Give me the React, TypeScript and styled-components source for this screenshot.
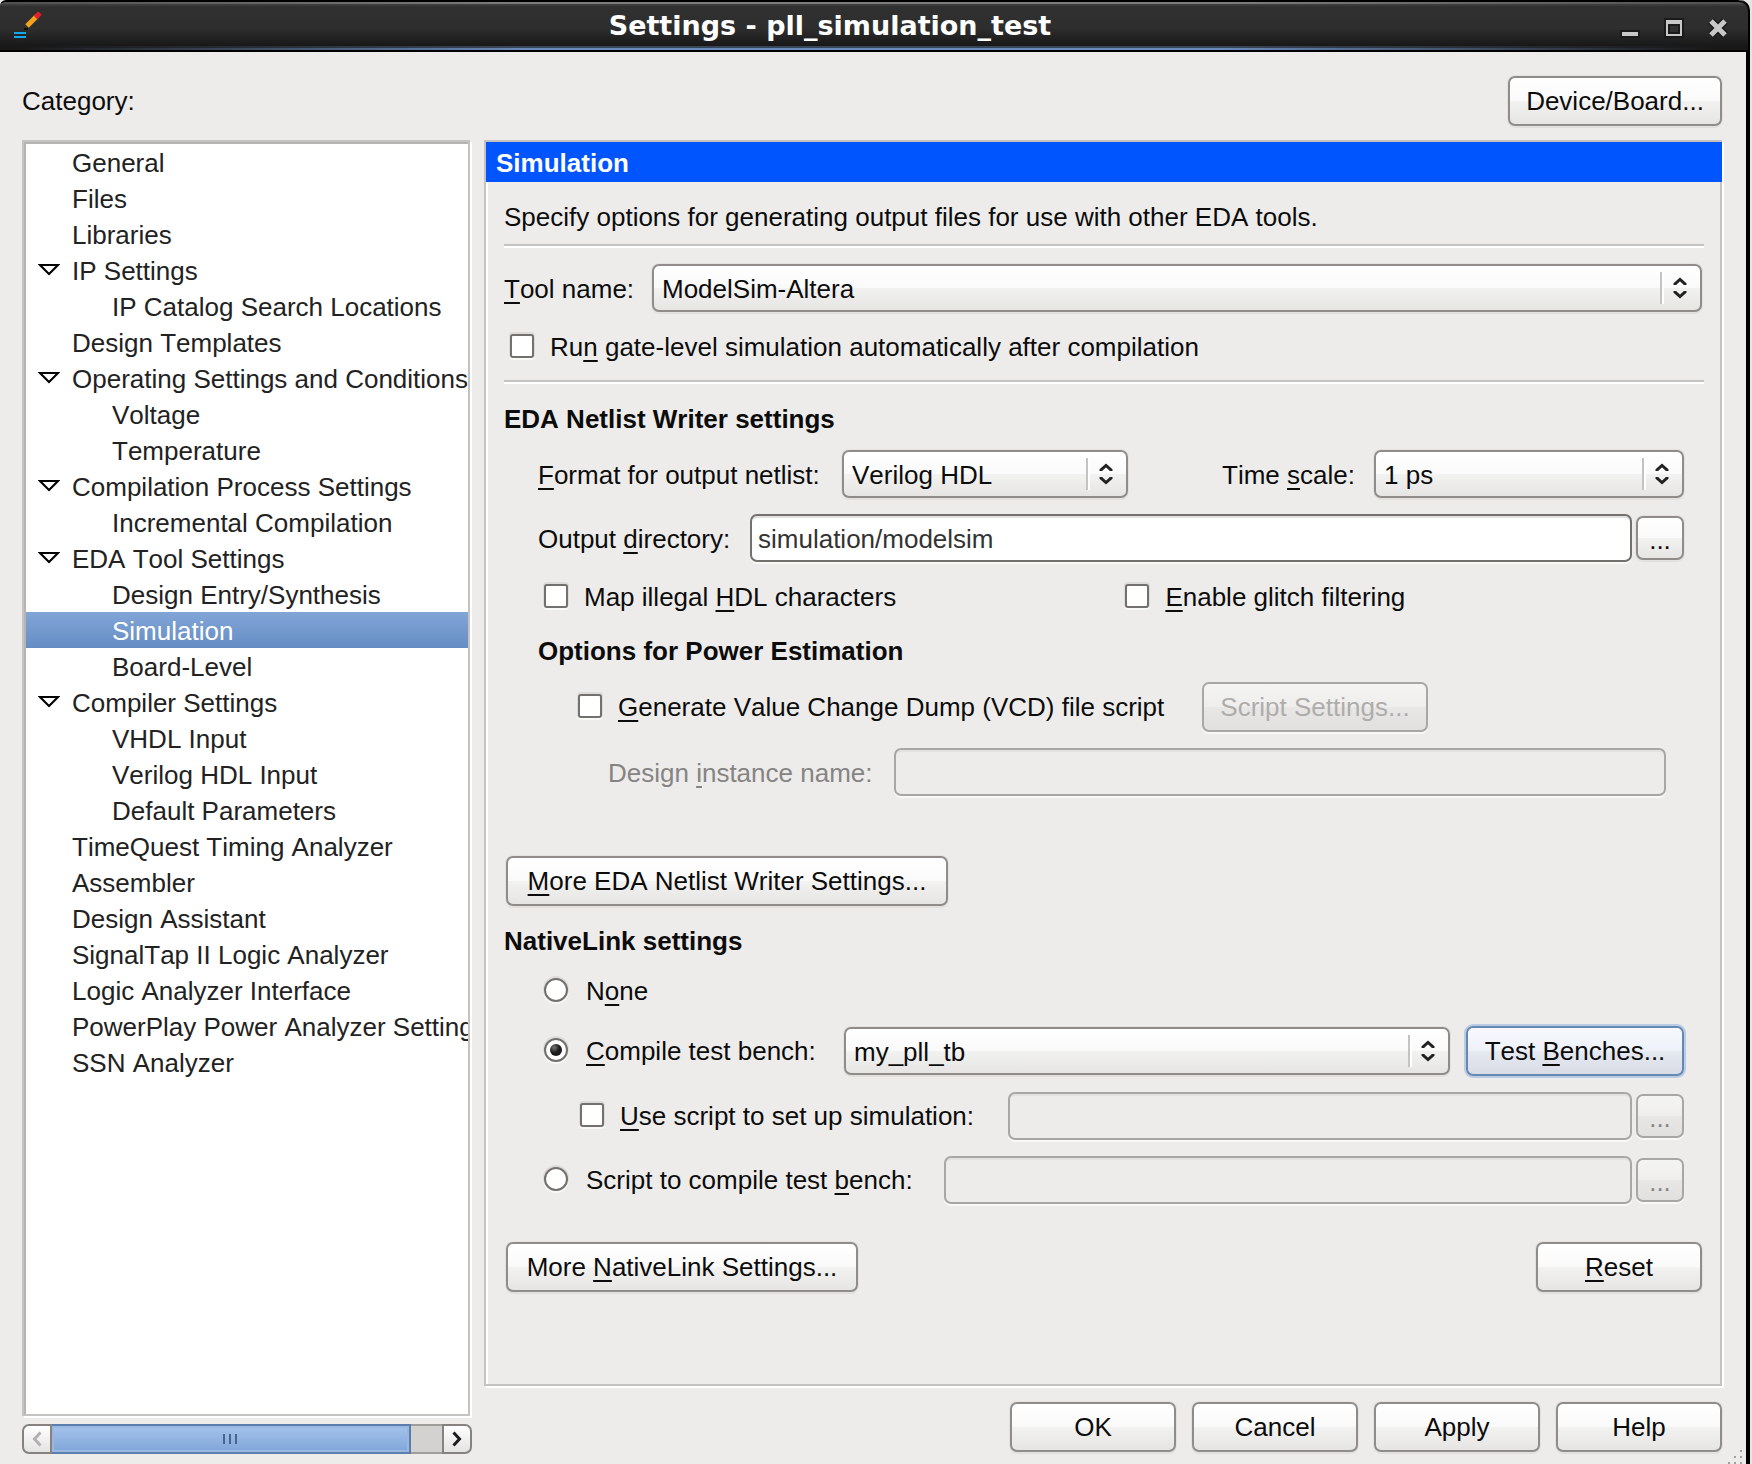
import React, { useId, useState } from "react";
import styled, { createGlobalStyle, css } from "styled-components";

const color = {
  base: "#edeceb",
  ink: "#0c0c0c",
  listInk: "#222222",
  line: "#c4c3c1",
  controlLine: "#8f8c89",
  fieldLine: "#73706d",
  disabledLine: "#a9a7a5",
  disabledInk: "#858483",
  accent: "#0055ff",
};

const GlobalStyle = createGlobalStyle`
  *, *::before, *::after { box-sizing: border-box; }
  body {
    margin: 0;
    background: #e6e5e4;
    color: ${color.ink};
    font: 26px/30px "Liberation Sans", Arial, sans-serif;
    font-kerning: none;
  }
  button, input, select { font: inherit; font-kerning: none; color: inherit; margin: 0; }
`;

const WindowFrame = styled.div`
  position: relative;
  display: flex;
  flex-direction: column;
  min-height: 100vh;
  margin-right: 2px;
  border-right: 4px solid #000000;
  border-radius: 0 10px 0 0;
  background: ${color.base};
`;

const TitleBar = styled.header`
  display: flex;
  align-items: center;
  height: 52px;
  margin-right: -2px;
  padding: 0 18px 0 14px;
  border-top: 2px solid #000000;
  border-bottom: 2px solid #000000;
  border-radius: 6px 10px 0 0;
  background:
    linear-gradient(90deg, transparent 1%, #6a8ab8 30%, #6a8ab8 70%, transparent 98%) 0 46px / 100% 2px no-repeat,
    linear-gradient(90deg, transparent 1%, #38465a 30%, #38465a 70%, transparent 98%) 0 44px / 100% 2px no-repeat,
    linear-gradient(90deg, transparent, #7c7c7c 30%, #7c7c7c 70%, transparent) 0 0 / 100% 2px no-repeat,
    linear-gradient(#505050 2px, #3c3c3c 2px, #3c3c3c 4px, #303030 4px, #2e2e2e 26px, #181818 44px);
`;

const Title = styled.h1`
  flex: 1;
  margin: 0;
  color: #ffffff;
  font: bold 27px/30px "DejaVu Sans", sans-serif;
  text-align: center;
`;

const WindowButtons = styled.div`
  display: flex;
  gap: 20px;
`;

const WindowButton = styled.button`
  display: flex;
  width: 24px;
  height: 24px;
  padding: 0;
  border: 0;
  background: none;
`;

const Content = styled.div`
  display: flex;
  flex: 1;
  flex-direction: column;
  gap: 14px;
  padding: 24px 24px 10px 22px;
`;

const Row = styled.div<{ $top?: number; $indent?: number; $end?: number; $gap?: number }>`
  display: flex;
  align-items: center;
  gap: ${(p) => p.$gap ?? 16}px;
  margin-top: ${(p) => p.$top ?? 0}px;
  padding-left: ${(p) => p.$indent ?? 0}px;
  padding-right: ${(p) => p.$end ?? 0}px;
`;

const FieldGroup = styled.div<{ $gap: number }>`
  display: flex;
  flex: 1;
  align-items: center;
  gap: ${(p) => p.$gap}px;
  min-width: 0;
`;

const TwoChecks = styled.div`
  display: grid;
  grid-template-columns: 51% 49%;
  margin-top: 20px;
  padding: 0 20px 0 40px;
`;

const Spacer = styled.div`
  flex: 1;
`;

const PushButton = styled.button<{ $minWidth?: number; $focused?: boolean }>`
  height: 50px;
  min-width: ${(p) => p.$minWidth ?? 0}px;
  padding: 0 12px;
  border: 2px solid ${color.controlLine};
  border-radius: 7px;
  background: linear-gradient(#ffffff, #fafafa 50%, #f2f2f1 50%, #e6e5e4);
  box-shadow: 0 0 0 1px #e3e2e0, 0 2px 0 #e0dfdd;
  white-space: nowrap;
  ${(p) =>
    p.$focused &&
    css`
      border-color: #6688b4;
      background: linear-gradient(#f7f9fe, #eef1f8 50%, #e5e9f1 50%, #d9dce4);
      box-shadow: 0 0 0 2px #b9cce4;
    `}
  &:disabled {
    border-color: ${color.disabledLine};
    background: linear-gradient(#f4f4f3, #efeeed 50%, #e8e7e6 50%, #e1e0df);
    box-shadow: 0 2px 0 #f8f8f7;
    color: #aeadab;
  }
`;

const BrowseButton = styled(PushButton)`
  width: 48px;
  height: 44px;
  padding: 4px 0 0;
  &:disabled { color: ${color.disabledInk}; }
`;

const Columns = styled.main`
  display: grid;
  flex: 1;
  grid-template-columns: 450px minmax(0, 1fr);
  gap: 12px;
`;

const Column = styled.div`
  display: flex;
  flex-direction: column;
  min-width: 0;
`;

const CategoryList = styled.ul`
  flex: 1;
  margin: 0 2px 8px 0;
  padding: 2px 0 0 2px;
  overflow: hidden;
  border: 2px solid ${color.line};
  box-shadow: inset 2px 2px 0 #b6b5b4, 2px 2px 0 #ffffff;
  background: #ffffff;
  list-style: none;
`;

const CategoryItem = styled.button<{ $child: boolean; $selected: boolean }>`
  display: flex;
  align-items: center;
  width: 100%;
  height: 36px;
  padding: 2px 0 0 ${(p) => (p.$child ? 86 : 12)}px;
  border: 0;
  background: ${(p) => (p.$selected ? "linear-gradient(#82a5d7, #658dc4)" : "none")};
  color: ${(p) => (p.$selected ? "#ffffff" : color.listInk)};
  text-align: left;
  white-space: nowrap;
`;

const Twisty = styled.span`
  display: flex;
  flex: none;
  width: 34px;
`;

const ScrollBar = styled.div`
  display: flex;
  height: 30px;
`;

const ScrollButton = styled.button<{ $side: "left" | "right" }>`
  display: flex;
  align-items: center;
  justify-content: center;
  width: 30px;
  padding: 0;
  border: 2px solid #85827f;
  border-radius: ${(p) => (p.$side === "left" ? "7px 0 0 7px" : "0 7px 7px 0")};
  background: linear-gradient(#ffffff, #e4e3e2);
`;

const ScrollTrack = styled.div`
  flex: 1;
  border: 2px solid #a09e9b;
  border-width: 2px 0;
  background: #d4d2d0;
`;

const ScrollThumb = styled.div`
  display: flex;
  align-items: center;
  justify-content: center;
  gap: 4px;
  width: 92%;
  height: 30px;
  margin-top: -2px;
  border: 2px solid #5c7eac;
  border-left: 0;
  background: linear-gradient(#a5c3ec, #80a5d8);
  box-shadow: inset 0 0 0 2px #98b8e2;
`;

const Grip = styled.span`
  width: 2px;
  height: 10px;
  background: #46658f;
`;

const Panel = styled.section`
  flex: 1;
  padding-bottom: 92px;
  border: 2px solid ${color.line};
  box-shadow: inset 2px 0 0 #ffffff, 2px 2px 0 #ffffff;
`;

const PanelTitle = styled.h2`
  margin: 0 -2px 0 0;
  padding: 6px 10px 4px;
  background: ${color.accent};
  color: #ffffff;
  font-size: 26px;
  line-height: 30px;
`;

const PanelBody = styled.div`
  padding: 20px 16px 0 18px;
`;

const Text = styled.p`
  margin: 0;
`;

const Separator = styled.hr<{ $top: number }>`
  height: 4px;
  margin: ${(p) => p.$top}px 0 0;
  border: 0;
  border-top: 2px solid ${color.line};
  background: #ffffff;
`;

const Heading = styled.h3<{ $top: number; $indent?: number }>`
  margin: ${(p) => p.$top}px 0 0;
  padding-left: ${(p) => p.$indent ?? 0}px;
  font-size: 26px;
  line-height: 30px;
`;

const FieldLabel = styled.label<{ $width: number; $disabled?: boolean }>`
  min-width: ${(p) => p.$width}px;
  padding-top: 2px;
  color: ${(p) => (p.$disabled ? color.disabledInk : "inherit")};
  white-space: nowrap;
`;

const Mnemonic = styled.span`
  text-decoration: underline 2px;
  text-underline-offset: 4px;
  text-decoration-skip-ink: none;
`;

const TextField = styled.input`
  flex: 1;
  min-width: 0;
  height: 48px;
  padding: 2px 6px 0;
  border: 2px solid ${color.fieldLine};
  border-radius: 7px;
  background: #ffffff;
  box-shadow: inset 0 2px 0 #e2e1e0, 0 2px 0 #f9f9f8;
  color: #333333;
  &:disabled {
    border-color: ${color.disabledLine};
    background: ${color.base};
  }
`;

const Combo = styled.div<{ $width?: number }>`
  display: grid;
  flex: ${(p) => (p.$width ? `0 0 ${p.$width}px` : "1")};
  grid-template-columns: minmax(0, 1fr) 42px;
`;

const ComboSelect = styled.select`
  grid-area: 1 / 1 / 2 / 3;
  height: 48px;
  padding: 2px 48px 0 8px;
  appearance: none;
  border: 2px solid ${color.controlLine};
  border-radius: 7px;
  background: linear-gradient(#ffffff, #fafafa 50%, #f2f2f1 50%, #e6e5e4);
  box-shadow: 0 0 0 1px #e3e2e0, 0 2px 0 #e0dfdd;
`;

const ComboArrows = styled.span`
  z-index: 1;
  display: flex;
  grid-area: 1 / 2;
  align-items: center;
  justify-content: center;
  height: 32px;
  margin: 8px 4px 8px 0;
  border-left: 2px solid ${color.line};
  box-shadow: inset 2px 0 0 #ffffff;
  pointer-events: none;
`;

const ToggleLabel = styled.label<{ $width?: number }>`
  display: flex;
  align-items: center;
  gap: 16px;
  min-width: ${(p) => p.$width ?? 0}px;
  white-space: nowrap;
`;

const Toggle = styled.input`
  && { margin-bottom: 2px; }
  display: grid;
  flex: none;
  place-items: center;
  width: 24px;
  height: 24px;
  appearance: none;
  border: 2px solid ${color.fieldLine};
  border-radius: ${(p) => (p.type === "radio" ? "50%" : "3px")};
  background: #ffffff;
  box-shadow: 0 -1px 0 1px #dddcda, 0 1px 0 1px #f8f8f7;
  &:checked::before {
    width: 12px;
    height: 12px;
    border-radius: ${(p) => (p.type === "radio" ? "50%" : "1px")};
    background: ${(p) => (p.type === "radio" ? "radial-gradient(circle at 35% 30%, #777777, #1c1c1c 45%)" : "#222222")};
    content: "";
  }
`;

const RadioLabel = styled(ToggleLabel)`
  gap: 18px;
`;

const Footer = styled.footer`
  display: flex;
  justify-content: flex-end;
  gap: 16px;
  margin-top: 16px;
  padding-bottom: 2px;
`;

const SizeGrip = styled.svg`
  position: absolute;
  right: 2px;
  bottom: 0;
`;

/** Renders a caption in which the character after "&" is the keyboard mnemonic. */
function Caption({ text }: { text: string }) {
  const at = text.indexOf("&");
  if (at < 0) return <>{text}</>;
  return (
    <span>
      {text.slice(0, at)}
      <Mnemonic>{text[at + 1]}</Mnemonic>
      {text.slice(at + 2)}
    </span>
  );
}

function ComboBox({ id, value, width, label }: { id?: string; value: string; width?: number; label?: string }) {
  return (
    <Combo $width={width}>
      <ComboSelect id={id} aria-label={label} defaultValue={value}>
        <option>{value}</option>
      </ComboSelect>
      <ComboArrows>
        <svg width="14" height="24" viewBox="0 0 14 24" fill="none" stroke="#222" strokeWidth="3">
          <path d="M2 9V8L7 3.500L12 8V9M2 15V16L7 20.500L12 16V15" />
        </svg>
      </ComboArrows>
    </Combo>
  );
}

function Check({ text, width }: { text: string; width?: number }) {
  return (
    <ToggleLabel $width={width}>
      <Toggle type="checkbox" />
      <Caption text={text} />
    </ToggleLabel>
  );
}

type RadioProps = { text: string; width?: number; checked: boolean; onSelect: () => void };

function Radio({ text, width, checked, onSelect }: RadioProps) {
  return (
    <RadioLabel $width={width}>
      <Toggle type="radio" name="native-link" checked={checked} onChange={onSelect} />
      <Caption text={text} />
    </RadioLabel>
  );
}

type Category = { name: string; child?: boolean; open?: boolean };

const categories: Category[] = [
  { name: "General" },
  { name: "Files" },
  { name: "Libraries" },
  { name: "IP Settings", open: true },
  { name: "IP Catalog Search Locations", child: true },
  { name: "Design Templates" },
  { name: "Operating Settings and Conditions", open: true },
  { name: "Voltage", child: true },
  { name: "Temperature", child: true },
  { name: "Compilation Process Settings", open: true },
  { name: "Incremental Compilation", child: true },
  { name: "EDA Tool Settings", open: true },
  { name: "Design Entry/Synthesis", child: true },
  { name: "Simulation", child: true },
  { name: "Board-Level", child: true },
  { name: "Compiler Settings", open: true },
  { name: "VHDL Input", child: true },
  { name: "Verilog HDL Input", child: true },
  { name: "Default Parameters", child: true },
  { name: "TimeQuest Timing Analyzer" },
  { name: "Assembler" },
  { name: "Design Assistant" },
  { name: "SignalTap II Logic Analyzer" },
  { name: "Logic Analyzer Interface" },
  { name: "PowerPlay Power Analyzer Settings" },
  { name: "SSN Analyzer" },
];

function CategoryTree() {
  const [selected, setSelected] = useState("Simulation");
  return (
    <Column>
      <CategoryList>
        {categories.map(({ name, child, open }) => (
          <li key={name}>
            <CategoryItem
              type="button"
              $child={!!child}
              $selected={name === selected}
              onClick={() => setSelected(name)}
            >
              {!child && (
                <Twisty>
                  {open && (
                    <svg width="22" height="16" viewBox="0 0 22 16" fill="#fff" stroke="#000" strokeWidth="2">
                      <path d="M2 2H20L11 11Z" />
                    </svg>
                  )}
                </Twisty>
              )}
              {name}
            </CategoryItem>
          </li>
        ))}
      </CategoryList>
      <ScrollBar>
        <ScrollButton type="button" $side="left" aria-label="Scroll left">
          <svg width="10" height="16" viewBox="0 0 10 16" fill="none" stroke="#b3b1af" strokeWidth="3">
            <path d="M8.500 1.500L2.500 8L8.500 14.500" />
          </svg>
        </ScrollButton>
        <ScrollTrack>
          <ScrollThumb>
            <Grip />
            <Grip />
            <Grip />
          </ScrollThumb>
        </ScrollTrack>
        <ScrollButton type="button" $side="right" aria-label="Scroll right">
          <svg width="10" height="16" viewBox="0 0 10 16" fill="none" stroke="#1c1c1c" strokeWidth="3">
            <path d="M1.500 1.500L7.500 8L1.500 14.500" />
          </svg>
        </ScrollButton>
      </ScrollBar>
    </Column>
  );
}

function SimulationPanel() {
  const id = useId();
  const [mode, setMode] = useState("bench");
  return (
    <Panel>
      <PanelTitle>Simulation</PanelTitle>
      <PanelBody>
        <Text>Specify options for generating output files for use with other EDA tools.</Text>
        <Separator $top={12} />
        <Row $top={16} $end={2}>
          <FieldLabel htmlFor={`${id}-tool`} $width={132}><Caption text="&Tool name:" /></FieldLabel>
          <ComboBox id={`${id}-tool`} value="ModelSim-Altera" />
        </Row>
        <Row $top={20} $indent={6}>
          <Check text="Ru&n gate-level simulation automatically after compilation" />
        </Row>
        <Separator $top={18} />

        <Heading $top={20}>EDA Netlist Writer settings</Heading>
        <Row $top={16} $indent={34} $end={20}>
          <FieldLabel htmlFor={`${id}-format`} $width={288}><Caption text="&Format for output netlist:" /></FieldLabel>
          <ComboBox id={`${id}-format`} value="Verilog HDL" width={286} />
          <Spacer />
          <FieldLabel htmlFor={`${id}-scale`} $width={136}><Caption text="Time &scale:" /></FieldLabel>
          <ComboBox id={`${id}-scale`} value="1 ps" width={310} />
        </Row>
        <Row $top={16} $indent={34} $end={20}>
          <FieldLabel htmlFor={`${id}-dir`} $width={196}><Caption text="Output &directory:" /></FieldLabel>
          <FieldGroup $gap={4}>
            <TextField id={`${id}-dir`} defaultValue="simulation/modelsim" />
            <BrowseButton type="button">...</BrowseButton>
          </FieldGroup>
        </Row>
        <TwoChecks>
          <Check text="Map illegal &HDL characters" />
          <Check text="&Enable glitch filtering" />
        </TwoChecks>
        <Heading $top={24} $indent={34}>Options for Power Estimation</Heading>
        <Row $top={16} $indent={74} $gap={24}>
          <Check text="&Generate Value Change Dump (VCD) file script" width={600} />
          <PushButton type="button" disabled $minWidth={226}>Script Settings...</PushButton>
        </Row>
        <Row $top={16} $indent={104} $end={38}>
          <FieldLabel htmlFor={`${id}-instance`} $width={270} $disabled>
            <Caption text="Design &instance name:" />
          </FieldLabel>
          <TextField id={`${id}-instance`} disabled />
        </Row>
        <Row $top={60} $indent={2}>
          <PushButton type="button" $minWidth={442}><Caption text="&More EDA Netlist Writer Settings..." /></PushButton>
        </Row>

        <Heading $top={20}>NativeLink settings</Heading>
        <Row $top={20} $indent={40}>
          <Radio text="N&one" checked={mode === "none"} onSelect={() => setMode("none")} />
        </Row>
        <Row $top={20} $indent={40} $end={20} $gap={24}>
          <Radio
            text="&Compile test bench:"
            width={276}
            checked={mode === "bench"}
            onSelect={() => setMode("bench")}
          />
          <FieldGroup $gap={16}>
            <ComboBox value="my_pll_tb" label="Test bench" />
            <PushButton type="button" $focused $minWidth={218}><Caption text="Test &Benches..." /></PushButton>
          </FieldGroup>
        </Row>
        <Row $top={16} $indent={76} $end={20} $gap={24}>
          <Check text="&Use script to set up simulation:" width={404} />
          <FieldGroup $gap={4}>
            <TextField disabled aria-label="Simulation setup script" />
            <BrowseButton type="button" disabled>...</BrowseButton>
          </FieldGroup>
        </Row>
        <Row $top={16} $indent={40} $end={20} $gap={24}>
          <Radio
            text="Script to compile test &bench:"
            width={376}
            checked={mode === "script"}
            onSelect={() => setMode("script")}
          />
          <FieldGroup $gap={4}>
            <TextField disabled aria-label="Test bench compile script" />
            <BrowseButton type="button" disabled>...</BrowseButton>
          </FieldGroup>
        </Row>
        <Row $top={38} $indent={2} $end={2}>
          <PushButton type="button" $minWidth={352}><Caption text="More &NativeLink Settings..." /></PushButton>
          <Spacer />
          <PushButton type="button" $minWidth={166}><Caption text="&Reset" /></PushButton>
        </Row>
      </PanelBody>
    </Panel>
  );
}

export default function App() {
  return (
    <>
      <GlobalStyle />
      <WindowFrame>
        <TitleBar>
          <svg width="28" height="28" viewBox="0 0 28 28">
            <path d="M13 14L23 4" stroke="#f5a21c" strokeWidth="5" />
            <path d="M21.500 5.500L26 1" stroke="#e3202a" strokeWidth="5" />
            <path d="M10 16h4v2h-4z" fill="#111" />
            <path d="M0 20h12v2H0zM0 24h12v2H0z" fill="#12a8ee" />
          </svg>
          <Title>Settings - pll_simulation_test</Title>
          <WindowButtons>
            <WindowButton type="button" aria-label="Minimize">
              <svg width="24" height="24" viewBox="0 0 24 24">
                <path d="M2 16h20v8H2z" fill="#1a1a1a" />
                <path d="M4 18h16v4H4z" fill="#c8c8c8" />
              </svg>
            </WindowButton>
            <WindowButton type="button" aria-label="Maximize">
              <svg width="24" height="24" viewBox="0 0 24 24">
                <path d="M2 4h20v20H2z" fill="#1a1a1a" />
                <path d="M4 6h16v16H4zM6 10v10h12V10z" fill="#c8c8c8" fillRule="evenodd" />
                <path d="M8 12h8v6H8z" fill="#303030" />
              </svg>
            </WindowButton>
            <WindowButton type="button" aria-label="Close">
              <svg width="24" height="24" viewBox="0 0 24 24" fill="none">
                <path d="M5 7L19 21M19 7L5 21" stroke="#1a1a1a" strokeWidth="8" />
                <path d="M5 7L19 21M19 7L5 21" stroke="#c8c8c8" strokeWidth="5" />
              </svg>
            </WindowButton>
          </WindowButtons>
        </TitleBar>
        <Content>
          <Row>
            <Text>Category:</Text>
            <Spacer />
            <PushButton type="button" $minWidth={214}>Device/Board...</PushButton>
          </Row>
          <Columns>
            <CategoryTree />
            <Column>
              <SimulationPanel />
              <Footer>
                <PushButton type="button" $minWidth={166}>OK</PushButton>
                <PushButton type="button" $minWidth={166}>Cancel</PushButton>
                <PushButton type="button" $minWidth={166}>Apply</PushButton>
                <PushButton type="button" $minWidth={166}>Help</PushButton>
              </Footer>
            </Column>
          </Columns>
        </Content>
        <SizeGrip width="16" height="14" viewBox="0 0 16 14" fill="#a3a19f">
          <path d="M12 0h2v2h-2zM6 6h2v2H6zM12 6h2v2h-2zM0 12h2v2H0zM6 12h2v2H6zM12 12h2v2h-2z" />
        </SizeGrip>
      </WindowFrame>
    </>
  );
}
